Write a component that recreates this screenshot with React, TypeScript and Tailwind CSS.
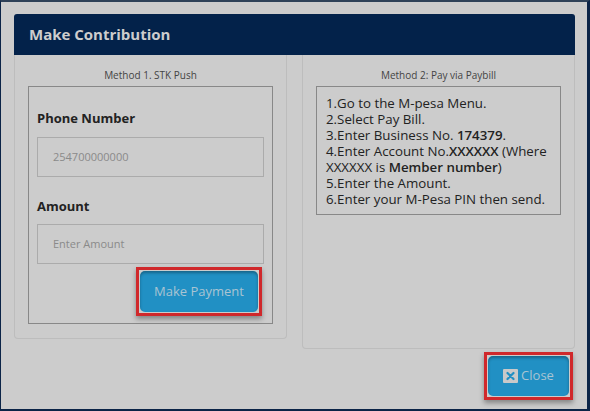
import React from "react";

const font = { fontFamily: '"Open Sans", "Liberation Sans", sans-serif' };

const CloseSquare = () => (
  <svg width="15" height="14" viewBox="0 0 15 14" className="shrink-0">
    <rect x="0" y="0" width="15" height="14" rx="1" fill="#c9c9c9" />
    <path d="M4.5 4 L10.5 10 M10.5 4 L4.5 10" stroke="#2190c4" strokeWidth="2.2" strokeLinecap="round" />
  </svg>
);

const Highlight: React.FC<{ children: React.ReactNode; className?: string }> = ({ children, className }) => (
  <div className={`border-[3px] border-[#d0282b] p-px shadow-[0_3px_5px_rgba(0,0,0,0.35)] ${className ?? ""}`}>
    {children}
  </div>
);

export default function App() {
  return (
    <div
      style={font}
      className="w-[590px] h-[411px] bg-[#cccccc] border-t-2 border-t-[#2e4158] border-l border-l-[#0b2447] border-r-[3px] border-r-[#0b2447] border-b-2 border-b-[#0b2447] pl-[13px] pr-[12px] pt-[12px] flex flex-col"
    >
      {/* Header */}
      <div className="h-[41px] bg-[#03224a] rounded-t-[3px] flex items-center pl-[15px]">
        <h1 className="text-[15px] font-bold text-[#cdcdcd]">Make Contribution</h1>
      </div>

      <div className="flex gap-[15px] items-start">
        {/* Method 1 */}
        <div className="w-[273px] h-[284px] border border-t-0 border-[#bdbdbd] rounded-b-[4px] px-[13px] pt-[13px]">
          <p className="text-[10px] leading-[14px] text-[#444] text-center mb-[4px]">Method 1. STK Push</p>
          <div className="border border-[#888] h-[238px] px-[8px] pt-[22px] flex flex-col">
            <label className="text-[13px] leading-[18px] font-bold text-[#222]">Phone Number</label>
            <div className="mt-[10px] h-[40px] border border-[#ababab] flex items-center px-[15px] text-[11px] text-[#8a8a8a]">
              254700000000
            </div>
            <label className="mt-[20px] text-[13px] leading-[18px] font-bold text-[#222]">Amount</label>
            <div className="mt-[9px] h-[40px] border border-[#ababab] flex items-center px-[15px] text-[11px] text-[#8a8a8a]">
              Enter Amount
            </div>
            <Highlight className="self-end mr-[2px] mt-[3px]">
              <button className="w-[118px] h-[41px] rounded-[5px] bg-[#2190c4] text-[13px] text-[#a9c4d2] shadow-[inset_0_2px_3px_rgba(0,0,0,0.3)]">
                Make Payment
              </button>
            </Highlight>
          </div>
        </div>

        {/* Method 2 */}
        <div className="w-[273px] h-[294px] border border-t-0 border-[#bdbdbd] rounded-b-[4px] px-[13px] pt-[13px]">
          <p className="text-[10px] leading-[14px] text-[#444] text-center mb-[4px]">Method 2: Pay via Paybill</p>
          <div className="border border-[#888] pl-[9px] pr-[3px] pt-[8px] pb-[7px] text-[13.3px] leading-[16px] text-[#222]">
            <p>1.Go to the M-pesa Menu.</p>
            <p>2.Select Pay Bill.</p>
            <p>
              3.Enter Business No. <span className="font-semibold">174379</span>.
            </p>
            <p>
              4.Enter Account No.<span className="font-semibold">XXXXXX</span> (Where XXXXXX is{" "}
              <span className="font-semibold">Member number</span>)
            </p>
            <p>5.Enter the Amount.</p>
            <p>6.Enter your M-Pesa PIN then send.</p>
          </div>
        </div>
      </div>

      {/* Footer */}
      <div className="flex justify-end mt-[3px] pr-[2px]">
        <Highlight>
          <button className="w-[81px] h-[40px] rounded-[5px] bg-[#2190c4] text-[13px] text-[#a9c4d2] shadow-[inset_0_2px_3px_rgba(0,0,0,0.3)] flex items-center justify-center gap-[3px]">
            <CloseSquare />
            Close
          </button>
        </Highlight>
      </div>
    </div>
  );
}
